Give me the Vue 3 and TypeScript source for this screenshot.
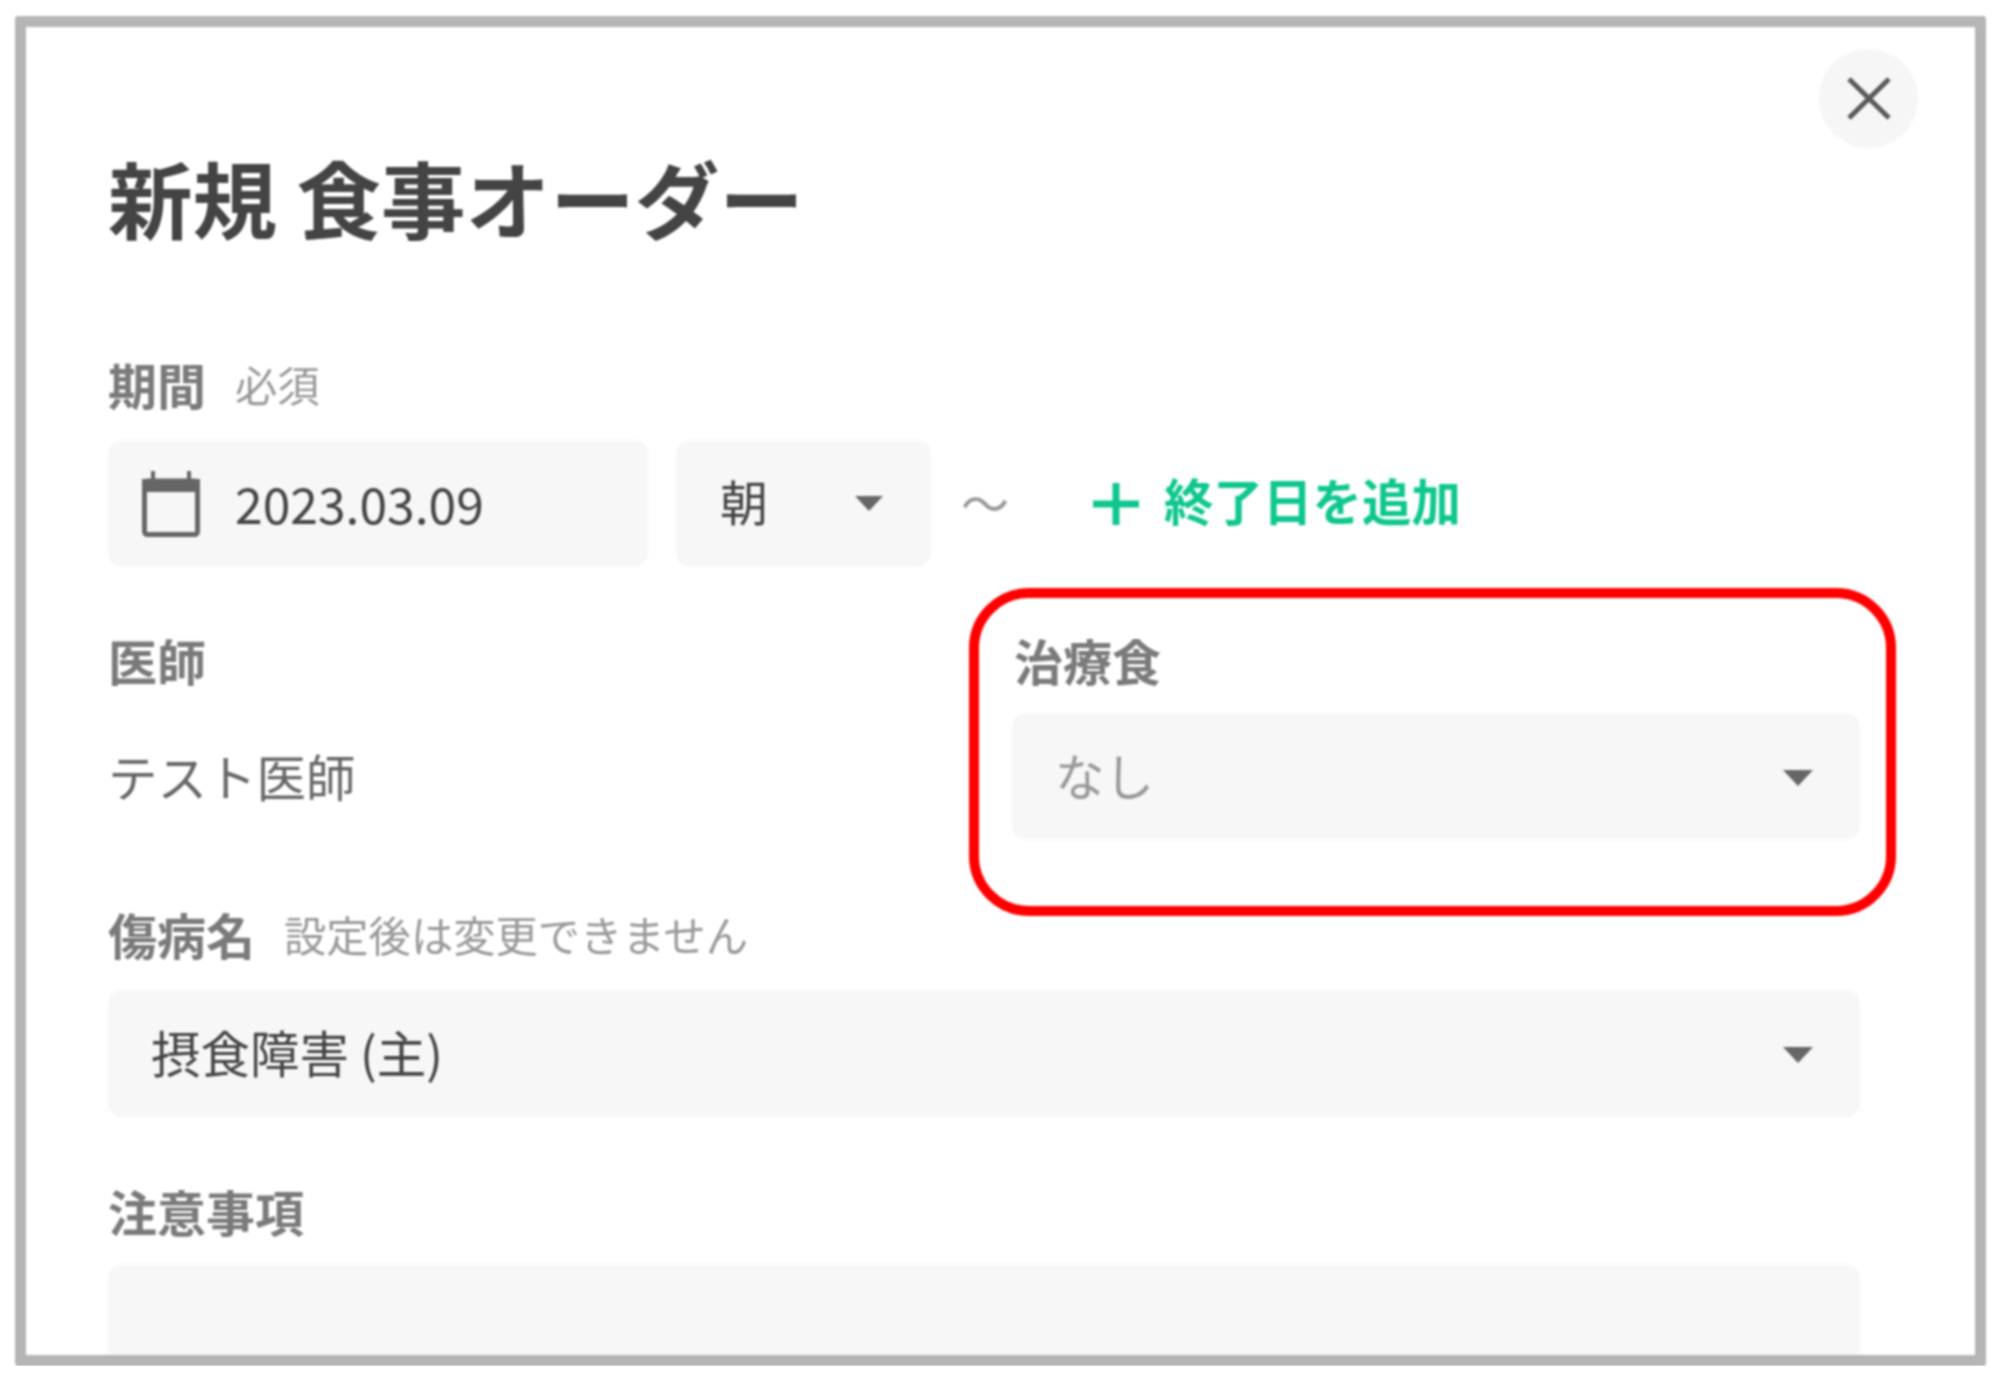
<script setup lang="ts">
const title: string = '新規 食事オーダー'
const startDate: string = '2023.03.09'
const doctorName: string = 'テスト医師'
</script>

<template>
  <div class="frame">
    <div class="close-row">
      <button class="close" type="button" aria-label="閉じる">
        <svg width="46" height="43" viewBox="0 0 46 43">
          <path d="M3 2 L43 41 M43 2 L3 41" fill="none" stroke="#5a5a5a" stroke-width="5" />
        </svg>
      </button>
    </div>
    <h1 class="title">{{ title }}</h1>

    <section class="period">
      <div class="label">期間<span class="note">必須</span></div>
      <div class="date-row">
        <div class="field date">
          <svg class="calendar" width="58" height="66" viewBox="0 0 58 66">
            <path d="M11 0 V10 M47 0 V10" stroke="#666" stroke-width="4" />
            <path d="M0 8 H58 V21 H0 Z" fill="#666" />
            <rect x="2.5" y="10" width="53" height="53.5" rx="3" fill="none" stroke="#666" stroke-width="5" />
          </svg>
          <span class="date-text">{{ startDate }}</span>
        </div>
        <div class="field meal">
          <span>朝</span>
          <svg class="arrow" width="28" height="15" viewBox="0 0 28 15"><path d="M0 0 H28 L14 15 Z" fill="#666" /></svg>
        </div>
        <span class="tilde">〜</span>
        <button class="add" type="button">
          <svg width="46" height="42" viewBox="0 0 46 42">
            <path d="M0 21 H46 M23 0 V42" fill="none" stroke="#0fc78e" stroke-width="7" />
          </svg>
          <span>終了日を追加</span>
        </button>
      </div>
    </section>

    <section class="two-col">
      <div class="doctor">
        <div class="label">医師</div>
        <div class="doctor-name">{{ doctorName }}</div>
      </div>
      <div class="treatment">
        <div class="label">治療食</div>
        <div class="field select muted">
          <span>なし</span>
          <svg class="arrow" width="30" height="16" viewBox="0 0 30 16"><path d="M0 0 H30 L15 16 Z" fill="#666" /></svg>
        </div>
        <span class="highlight"></span>
      </div>
    </section>

    <section class="disease">
      <div class="label">傷病名<span class="note">設定後は変更できません</span></div>
      <div class="field select">
        <span>摂食障害 (主)</span>
        <svg class="arrow" width="30" height="16" viewBox="0 0 30 16"><path d="M0 0 H30 L15 16 Z" fill="#666" /></svg>
      </div>
    </section>

    <section class="caution">
      <div class="label">注意事項</div>
      <div class="textarea"></div>
    </section>
  </div>
</template>

<style>
html, body {
  background: #fff;
}
</style>

<style scoped>
.frame {
  box-sizing: border-box;
  width: 1971px;
  height: 1350px;
  margin: 16px 0 0 15px;
  padding: 22px 115px 0 82px;
  border: 11px solid #b5b5b5;
  border-radius: 3px;
  overflow: hidden;
  background: #fff;
  color: #444;
  font-family: "Noto Sans CJK JP", "Noto Sans", sans-serif;
  font-size: 49px;
  filter: blur(0.9px);
}

.close-row {
  display: flex;
  justify-content: flex-end;
  margin-right: -58px;
}

.close {
  display: flex;
  align-items: center;
  justify-content: center;
  width: 99px;
  height: 99px;
  padding: 0;
  border: 0;
  border-radius: 50%;
  background: #f6f6f6;
}

.title {
  height: 100px;
  margin: -2px 0 0;
  font-size: 84.6px;
  line-height: 100px;
  font-weight: 700;
  color: #444;
}

.label {
  display: flex;
  align-items: flex-start;
  height: 60px;
  font-size: 49px;
  line-height: 53px;
  font-weight: 700;
  color: #7a7a7a;
}

.note {
  margin-left: 29px;
  font-size: 42.3px;
  font-weight: 400;
  color: #999;
}

.period {
  margin-top: 111px;
}

.date-row {
  display: flex;
  align-items: center;
  margin-top: 23px;
}

.field {
  box-sizing: border-box;
  display: flex;
  align-items: center;
  height: 127px;
  border-radius: 14px;
  background: #f7f7f7;
}

.date {
  width: 540px;
  padding-left: 34px;
}

.date-text {
  margin: 0 0 4px 35px;
  font-size: 49.8px;
}

.meal {
  justify-content: space-between;
  width: 255px;
  margin-left: 28px;
  padding: 0 48px 0 44px;
  font-size: 48px;
}

.meal span {
  margin-bottom: 8px;
}

.tilde {
  width: 48px;
  margin: 0 0 6px 30px;
  font-size: 48px;
  color: #999;
}

.add {
  display: flex;
  align-items: center;
  margin-left: 84px;
  padding: 0;
  border: 0;
  background: none;
  font: inherit;
  font-size: 49.5px;
  font-weight: 700;
  color: #0fc78e;
}

.add span {
  margin: 0 0 8px 25px;
}

.two-col {
  display: grid;
  grid-template-columns: 904px 1fr;
  margin-top: 66px;
}

.doctor-name {
  margin-top: 20px;
  height: 126px;
  font-size: 49.5px;
  line-height: 126px;
  color: #666;
}

.treatment {
  position: relative;
}

.treatment .label {
  margin-left: 2px;
}

.select {
  justify-content: space-between;
  margin-top: 20px;
  padding: 0 47px 0 43px;
  font-size: 49.5px;
}

.select span {
  margin-bottom: 4px;
}

.select .arrow {
  margin-top: 2px;
}

.muted {
  color: #999;
}

.highlight {
  position: absolute;
  top: -45px;
  left: -43px;
  right: -36px;
  bottom: -76px;
  border: 10px solid #f00;
  border-radius: 60px;
}

.disease {
  margin-top: 67px;
}

.disease .select {
  margin-top: 23px;
}

.caution {
  margin-top: 67px;
}

.textarea {
  height: 140px;
  margin-top: 20px;
  border-radius: 14px;
  background: #f7f7f7;
}
</style>
